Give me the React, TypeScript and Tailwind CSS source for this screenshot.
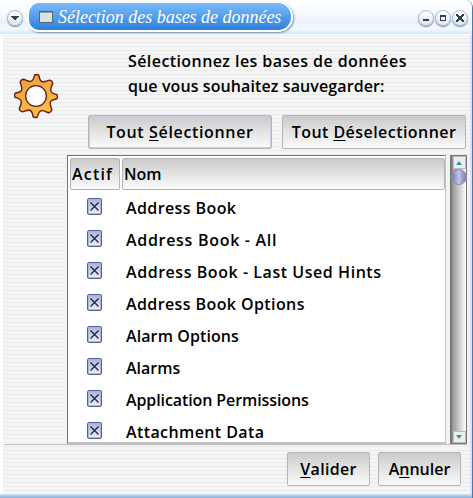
import { useState } from "react";
import type { ReactNode } from "react";

const DATABASES = [
  { name: "Address Book", tracking: "tracking-[0.4px]" },
  { name: "Address Book - All", tracking: "tracking-[0.7px]" },
  { name: "Address Book - Last Used Hints", tracking: "tracking-[0.55px]" },
  { name: "Address Book Options", tracking: "tracking-[0.4px]" },
  { name: "Alarm Options", tracking: "tracking-[0.1px]" },
  { name: "Alarms", tracking: "tracking-[0px]" },
  { name: "Application Permissions", tracking: "tracking-[-0.1px]" },
  { name: "Attachment Data", tracking: "tracking-[0.4px]" },
];

const raised = "border border-[#b5b5b5] rounded-[2px] bg-linear-to-b from-[#cbcbcb] to-[#fbfbfb]";

const stripes =
  "bg-[repeating-linear-gradient(to_bottom,#f5f5f5_0px,#f5f5f5_3px,#ebebeb_3px,#ebebeb_4px)]";

function Gear() {
  return (
    <svg width="46" height="46" viewBox="-23 -23 46 46">
      <defs>
        <linearGradient id="gear" x1="0" y1="0" x2="0.4" y2="1">
          <stop offset="0" stopColor="#e5a03c" />
          <stop offset="1" stopColor="#fcbb48" />
        </linearGradient>
      </defs>
      <path
        transform="rotate(2)"
        d="M-2-21Q0-22 2-21C3-18 3-15 6-14.5C9-14 11-16 13.4-16.3Q15.7-15.7 16.3-13.4C16-11 14-9 14.5-6C15-3 18-3 21-2Q22 0 21 2C18 3 15 3 14.5 6C14 9 16 11 16.3 13.4Q15.7 15.7 13.4 16.3C11 16 9 14 6 14.5C3 15 3 18 2 21Q0 22-2 21C-3 18-3 15-6 14.5C-9 14-11 16-13.4 16.3Q-15.7 15.7-16.3 13.4C-16 11-14 9-14.5 6C-15 3-18 3-21 2Q-22 0-21-2C-18-3-15-3-14.5-6C-14-9-16-11-16.3-13.4Q-15.7-15.7-13.4-16.3C-11-16-9-14-6-14.5C-3-15-3-18-2-21Z"
        fill="url(#gear)"
        stroke="#6b1a10"
        strokeWidth="1.4"
      />
      <circle r="10.4" fill="#fff" stroke="#6b1a10" strokeWidth="1.3" />
    </svg>
  );
}

function TitleButton({ children }: { children: ReactNode }) {
  return (
    <button className="size-4 rounded-full border border-[#a9bccf] bg-linear-to-b from-white to-[#dce8f2] shadow-[0_1px_1px_#6f8ba7] flex items-center justify-center">
      <svg width="8" height="8" viewBox="0 0 8 8" fill="#3c4042" shapeRendering="crispEdges">
        {children}
      </svg>
    </button>
  );
}

function CheckBox({ checked, onChange }: { checked: boolean; onChange: () => void }) {
  return (
    <button
      onClick={onChange}
      className="w-[15px] h-[17px] rounded-[2px] border border-[#5b6288] bg-linear-to-b from-[#a9b1dc] to-[#eef3ff] shadow-[inset_0_0_0_1px_#aab3d6] flex items-center justify-center"
    >
      {checked && (
        <svg width="9" height="9" viewBox="0 0 9 9">
          <path d="M.5.5l8 8M8.5.5l-8 8" stroke="#20243c" strokeWidth="1.3" />
        </svg>
      )}
    </button>
  );
}

export default function App() {
  const [active, setActive] = useState(DATABASES.map(() => true));

  const toggle = (index: number) => setActive(active.map((a, i) => (i === index ? !a : a)));

  return (
    <div className="w-[473px] h-[498px] overflow-hidden flex flex-col bg-white rounded-tl-[8px] rounded-tr-[8px] border-r border-[#4d79a9] font-['Open_Sans','Noto_Sans',sans-serif] font-semibold text-[16px] text-black whitespace-nowrap">
      <header className="h-[35px] shrink-0 pt-[2px] pl-[6px] pr-1 flex border-b border-[#f8fbff] bg-[linear-gradient(to_bottom,#ffffff_0px,#f9fbfe_10px,#eaf3fb_22px,#f3f9fe_29px,#d9e9f8_33px)]">
        <div className="mt-2 w-[21px] ml-px">
          <TitleButton>
            <path d="M0 2h8v1H7v1H6v1H5v1H3V5H2V4H1V3H0z" />
          </TitleButton>
        </div>
        <div className="w-[266px] h-[30px] -ml-px rounded-l-[12px] rounded-r-[15px] border-2 border-t-1 border-white bg-linear-to-b from-[#79bbfb] to-[#2c80dc] shadow-[1px_1px_2px_#7590ad] flex items-center pl-[10px]">
          <svg width="14" height="12" viewBox="0 0 14 12" shapeRendering="crispEdges">
            <path d="M0 0h14v12H0z" fill="#58656e" />
            <path d="M1 2h12v9H1z" fill="#d9e2e5" />
            <path d="M1 1h12v1H1z" fill="#8fa0ad" />
          </svg>
          <span className="ml-[5px] font-['Liberation_Serif',serif] italic font-normal text-[18px] leading-none tracking-[-0.02px] text-white">
            Sélection des bases de données
          </span>
        </div>
        <div className="ml-auto mt-2 flex gap-px">
          <TitleButton>
            <path d="M1 5h6v2H1z" />
          </TitleButton>
          <TitleButton>
            <path fillRule="evenodd" d="M1 1h6v6H1zM2 3v3h4V3z" />
          </TitleButton>
          <TitleButton>
            <path d="M0 0h2v1h1v1h2V1h1V0h2v2H7v1H6v2h1v1h1v2H6V7H5V6H3v1H2v1H0V6h1V5h1V3H1V2H0z" />
          </TitleButton>
        </div>
      </header>

      <div className={`h-[459px] ml-[3px] flex flex-col border-r-2 border-[#d4e3fa] ${stripes}`}>
        <div className="h-[409px] shrink-0 flex pr-px">
          <div className="w-16 pt-[38px] pl-[10px]">
            <Gear />
          </div>
          <div className="w-[400px] flex flex-col">
            <div className="h-20 pl-[61px] pt-[14px] leading-[25px]">
              <p className="tracking-[0.42px]">Sélectionnez les bases de données</p>
              <p className="tracking-[0.1px]">que vous souhaitez sauvegarder:</p>
            </div>
            <div className="flex gap-[10px] pl-[21px] h-[34px] shrink-0">
              <button
                onClick={() => setActive(DATABASES.map(() => true))}
                className={`w-[184px] shadow-[inset_0_0_0_1px_#c9cce0] tracking-[0.65px] ${raised} border-[#969cac]`}
              >
                Tout <u className="underline-offset-2">S</u>électionner
              </button>
              <button
                onClick={() => setActive(DATABASES.map(() => false))}
                className={`w-[184px] tracking-[0.45px] ${raised}`}
              >
                Tout <u className="underline-offset-2">D</u>éselectionner
              </button>
            </div>
            <div className="mt-[6px] h-[289px] flex gap-1">
              <div className="w-[379px] bg-white border-t border-l border-[#737373] border-r border-r-[#c3c3c3] border-b-2 border-b-[#c3c3c3] pt-[2px] pl-[2px] overflow-hidden">
                <div className="flex gap-[2px] h-8">
                  <div className={`w-[50px] pl-px tracking-[1.2px] flex items-center ${raised}`}>Actif</div>
                  <div className={`w-[323px] pl-px flex items-center ${raised}`}>Nom</div>
                </div>
                {DATABASES.map((db, i) => (
                  <div key={db.name} className="h-8 flex items-center">
                    <div className="w-[56px] pl-[17px]">
                      <CheckBox checked={active[i]} onChange={() => toggle(i)} />
                    </div>
                    <span className={`leading-8 pt-[3px] ${db.tracking}`}>{db.name}</span>
                  </div>
                ))}
              </div>
              <div className="w-[17px] border border-[#777] border-l-2 bg-linear-to-r from-[#969696] to-white flex flex-col items-center">
                <button className="w-[13px] h-[13px] shrink-0 border border-[#bbb] bg-[#eee] flex items-center justify-center">
                  <svg width="6" height="4" viewBox="0 0 6 4">
                    <path d="M0 4L3 0L6 4z" fill="#2b98a7" />
                  </svg>
                </button>
                <div className="size-4 shrink-0 rounded-full border border-[#8b90b4] bg-linear-to-r from-[#777ea9] via-[#c0c4e6] to-[#777ea9]" />
                <button className="mt-auto w-[13px] h-3 shrink-0 border border-[#bbb] bg-[#eee] flex items-center justify-center">
                  <svg width="6" height="4" viewBox="0 0 6 4">
                    <path d="M0 0h6L3 4z" fill="#2b98a7" />
                  </svg>
                </button>
              </div>
            </div>
          </div>
        </div>
        <div className="ml-[2px] mr-[3px] border-t border-[#bdbdbd] h-[50px] pt-[7px] pr-[6px] flex justify-end gap-2">
          <button className={`w-[83px] h-[34px] tracking-[0.3px] ${raised}`}>
            <u className="underline-offset-2">V</u>alider
          </button>
          <button className={`w-[83px] h-[34px] ${raised}`}>
            A<u className="underline-offset-2">n</u>nuler
          </button>
        </div>
      </div>
      <div className="h-1 shrink-0 bg-linear-to-b from-[#d5e4f5] to-[#85abd1]" />
    </div>
  );
}
